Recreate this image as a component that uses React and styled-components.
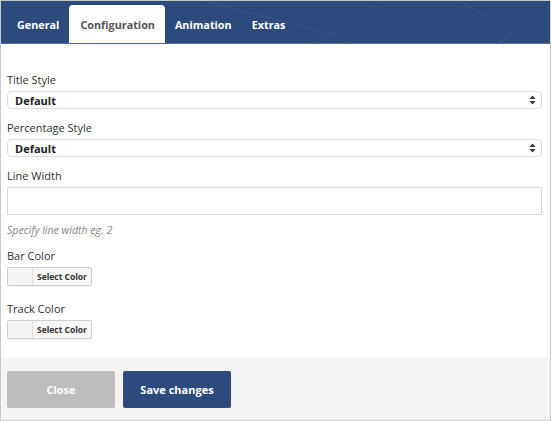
import React from "react";
import styled, { createGlobalStyle } from "styled-components";

const GlobalStyle = createGlobalStyle`
  html, body {
    margin: 0;
    padding: 0;
    background: #ffffff;
  }
  body {
    font-family: "Open Sans", "Liberation Sans", sans-serif;
  }
`;

const Modal = styled.div`
  width: 551px;
  height: 421px;
  box-sizing: border-box;
  border: 1px solid #c9c9c9;
  display: flex;
  flex-direction: column;
  background: #fff;
  overflow: hidden;
`;

const Header = styled.div`
  position: relative;
  height: 43px;
  box-sizing: border-box;
  background: #2c4a7c;
  border-bottom: 1px solid #52699a;
  display: flex;
  align-items: flex-end;
  padding-left: 6px;
  overflow: hidden;
`;

const Pattern = styled.svg`
  position: absolute;
  left: 0;
  top: 0;
  pointer-events: none;
`;

const Tab = styled.div`
  position: relative;
  height: 39px;
  margin-bottom: -1px;
  padding: 0 10px 0 ${(p) => (p.active ? "11px" : "10px")};
  display: flex;
  align-items: center;
  box-sizing: border-box;
  font-size: 10.8px;
  font-weight: 700;
  color: ${(p) => (p.active ? "#555555" : "#ffffff")};
  background: ${(p) => (p.active ? "#ffffff" : "transparent")};
  border-radius: 4px 4px 0 0;
`;

const Body = styled.div`
  flex: 1;
  padding: 28px 8px 0 6px;
  display: flex;
  flex-direction: column;
`;

const Label = styled.div`
  font-size: 11px;
  font-weight: 500;
  line-height: 16px;
  color: #333333;
  margin-top: ${(p) => p.gap || 0}px;
  margin-bottom: 3px;
`;

const SelectBox = styled.div`
  height: 18px;
  box-sizing: border-box;
  border: 1px solid #dcdcdc;
  border-radius: 4px;
  display: flex;
  align-items: center;
  justify-content: space-between;
  padding: 0 5px 0 7px;
  font-size: 11px;
  font-weight: 700;
  color: #222;
  background: #fff;
`;

const TextInput = styled.input`
  height: 28px;
  box-sizing: border-box;
  border: 1px solid #dadada;
  border-radius: 1px;
  padding: 0 8px;
  font-family: inherit;
  font-size: 11px;
  outline: none;
  margin: 0;
  width: 100%;
`;

const Help = styled.div`
  margin-top: 7px;
  font-size: 10.6px;
  line-height: 16px;
  font-style: italic;
  color: #888888;
`;

const ColorButton = styled.div`
  width: 85px;
  height: 19px;
  box-sizing: border-box;
  border: 1px solid #cfcfcf;
  border-radius: 2px;
  display: flex;
  background: #f7f7f7;
  box-shadow: 0 1px 0 rgba(0, 0, 0, 0.05);
`;

const Swatch = styled.div`
  width: 24px;
  border-right: 1px solid #dedede;
  background: #f4f4f4;
`;

const ColorText = styled.div`
  flex: 1;
  display: flex;
  align-items: center;
  justify-content: center;
  font-size: 8.5px;
  font-weight: 700;
  color: #333;
`;

const Footer = styled.div`
  height: 63px;
  box-sizing: border-box;
  background: #f4f4f4;
  padding: 14px 6px 0;
  display: flex;
  gap: 8px;
`;

const Button = styled.div`
  width: 108px;
  height: 37px;
  border-radius: 2px;
  display: flex;
  align-items: center;
  justify-content: center;
  font-size: 11px;
  font-weight: 700;
  color: #fff;
  background: ${(p) => (p.primary ? "#2c4a7c" : "#bdbdbd")};
`;

function Arrows() {
  return (
    <svg width="7" height="10" viewBox="0 0 7 10">
      <path d="M3.5 0.5 L6.5 4 H0.5 Z" fill="#333" />
      <path d="M3.5 9.5 L6.5 6 H0.5 Z" fill="#333" />
    </svg>
  );
}

function Select({ value }) {
  return (
    <SelectBox>
      <span>{value}</span>
      <Arrows />
    </SelectBox>
  );
}

export default function App() {
  return (
    <>
      <GlobalStyle />
      <Modal>
        <Header>
          <Pattern width="549" height="43" viewBox="0 0 549 43">
            <g stroke="rgba(255,255,255,0.07)" strokeWidth="1" fill="none">
              <line x1="196" y1="-2" x2="330" y2="33" />
              <line x1="330" y1="33" x2="380" y2="60" />
              <line x1="384" y1="-2" x2="300" y2="52" />
              <line x1="456" y1="-2" x2="513" y2="33" />
              <line x1="513" y1="33" x2="480" y2="52" />
            </g>
          </Pattern>
          <Tab>General</Tab>
          <Tab active>Configuration</Tab>
          <Tab>Animation</Tab>
          <Tab>Extras</Tab>
        </Header>
        <Body>
          <Label>Title Style</Label>
          <Select value="Default" />
          <Label gap={11}>Percentage Style</Label>
          <Select value="Default" />
          <Label gap={11}>Line Width</Label>
          <TextInput type="text" />
          <Help>Specify line width eg. 2</Help>
          <Label gap={10}>Bar Color</Label>
          <ColorButton>
            <Swatch />
            <ColorText>Select Color</ColorText>
          </ColorButton>
          <Label gap={15}>Track Color</Label>
          <ColorButton>
            <Swatch />
            <ColorText>Select Color</ColorText>
          </ColorButton>
        </Body>
        <Footer>
          <Button>Close</Button>
          <Button primary>Save changes</Button>
        </Footer>
      </Modal>
    </>
  );
}
